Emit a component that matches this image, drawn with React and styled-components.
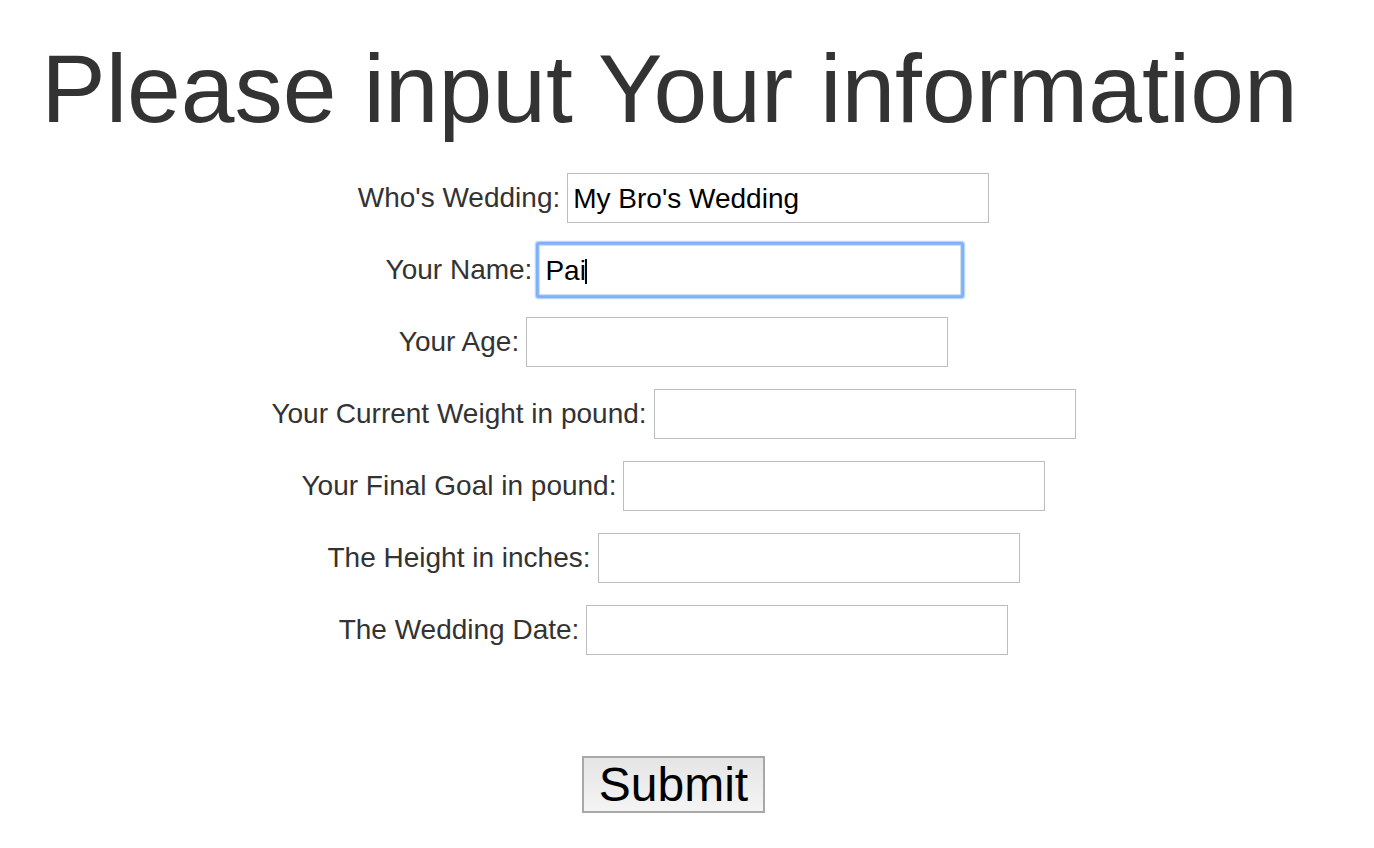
import React from "react";
import styled, { createGlobalStyle, css } from "styled-components";

const Global = createGlobalStyle`
  html, body { margin: 0; padding: 0; background: #fff; }
  body { font-family: "Liberation Sans", Arial, Helvetica, sans-serif; }
`;

const Page = styled.div`
  width: 1347px;
  padding-top: 34px;
  padding-bottom: 30px;
`;

const Title = styled.h1`
  margin: 0;
  padding-right: 8px;
  font-size: 96.6px;
  line-height: 110px;
  font-weight: 400;
  color: #333;
  text-align: center;
  white-space: nowrap;
`;

const Form = styled.form`
  margin-top: 29px;
  display: flex;
  flex-direction: column;
  gap: 22px;
`;

const Row = styled.div`
  display: flex;
  justify-content: center;
  align-items: center;
  gap: 7px;
  height: 50px;
`;

const Label = styled.label`
  font-size: 28px;
  line-height: 32px;
  color: #333;
  white-space: nowrap;
`;

const Field = styled.span`
  position: relative;
  display: inline-flex;
`;

const Input = styled.input`
  box-sizing: border-box;
  width: 422px;
  height: 50px;
  margin: 0;
  padding: 2px 5px 0;
  border: 1px solid #bdbdbd;
  border-radius: 0;
  background: #fff;
  font-family: "Liberation Sans", Arial, Helvetica, sans-serif;
  font-size: 28px;
  color: #000;
  outline: none;
  ${(p) =>
    p.$focused &&
    css`
      border-color: #cfdcef;
      caret-color: transparent;
      box-shadow: 0 0 0 1px #8dbaf8, 0 0 0 3px #7eb1fa, 0 0 1.5px 4px #a9cdfc;
      border-radius: 1px;
    `}
`;

const Caret = styled.span`
  position: absolute;
  top: 14px;
  width: 1.5px;
  height: 25px;
  background: #000;
  pointer-events: none;
`;

const Actions = styled.div`
  display: flex;
  justify-content: center;
  margin-top: 79px;
`;

const SubmitButton = styled.button`
  box-sizing: border-box;
  width: 183px;
  height: 57px;
  padding: 0;
  border: 2px solid #a8a8a8;
  border-radius: 0;
  background: linear-gradient(#e5e5e5, #f4f4f4);
  font-family: "Liberation Sans", Arial, Helvetica, sans-serif;
  font-size: 48px;
  line-height: 53px;
  color: #000;
  cursor: pointer;
`;

const fields = [
  { id: "who", label: "Who's Wedding:", value: "My Bro's Wedding" },
  { id: "name", label: "Your Name:", value: "Pai", focused: true, caretX: 46 },
  { id: "age", label: "Your Age:" },
  { id: "weight", label: "Your Current Weight in pound:" },
  { id: "goal", label: "Your Final Goal in pound:" },
  { id: "height", label: "The Height in inches:" },
  { id: "date", label: "The Wedding Date:" },
];

export default function App() {
  return (
    <>
      <Global />
      <Page>
        <Title>Please input Your information</Title>
        <Form onSubmit={(e) => e.preventDefault()}>
          {fields.map((f) => (
            <Row key={f.id}>
              <Label htmlFor={f.id}>{f.label}</Label>
              <Field>
                <Input
                  id={f.id}
                  type="text"
                  defaultValue={f.value || ""}
                  $focused={f.focused}
                />
                {f.focused && <Caret style={{ left: f.caretX }} />}
              </Field>
            </Row>
          ))}
          <Actions>
            <SubmitButton type="submit">Submit</SubmitButton>
          </Actions>
        </Form>
      </Page>
    </>
  );
}
